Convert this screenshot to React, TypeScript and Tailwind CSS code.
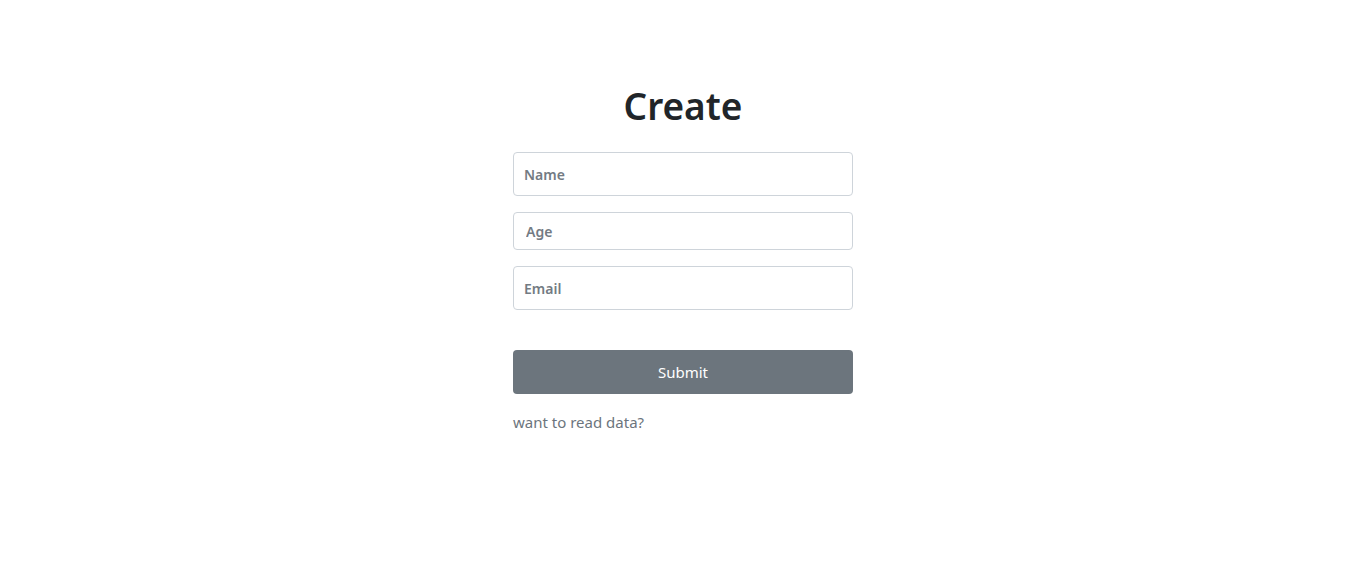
export default function App() {
  return (
    <main
      className="min-h-screen bg-white flex justify-center"
      style={{ fontFamily: '"Noto Sans", "Open Sans", sans-serif' }}
    >
      <div className="w-[340px] pt-[82px]">
        <h1 className="text-center text-[37px] leading-[48px] font-semibold text-[#212529]">Create</h1>

        <form className="mt-[22px]" onSubmit={(e) => e.preventDefault()}>
          <input
            type="text"
            placeholder="Name"
            className="block w-full h-[44px] px-[10px] border border-[#ced4da] rounded-[4px] text-[14px] font-semibold text-[#212529] placeholder:text-[#737b83] outline-none"
          />
          <input
            type="number"
            placeholder="Age"
            className="block w-full h-[38px] mt-[16px] px-[12px] border border-[#ced4da] rounded-[4px] text-[14px] font-semibold text-[#212529] placeholder:text-[#737b83] outline-none"
          />
          <input
            type="email"
            placeholder="Email"
            className="block w-full h-[44px] mt-[16px] px-[10px] border border-[#ced4da] rounded-[4px] text-[14px] font-semibold text-[#212529] placeholder:text-[#737b83] outline-none"
          />
          <button
            type="submit"
            className="block w-full h-[44px] mt-[40px] rounded-[4px] bg-[#6c757d] text-white text-[15px]"
          >
            Submit
          </button>
        </form>

        <p className="mt-[17px] text-[15px] text-[#6c757d]">want to read data?</p>
      </div>
    </main>
  );
}
